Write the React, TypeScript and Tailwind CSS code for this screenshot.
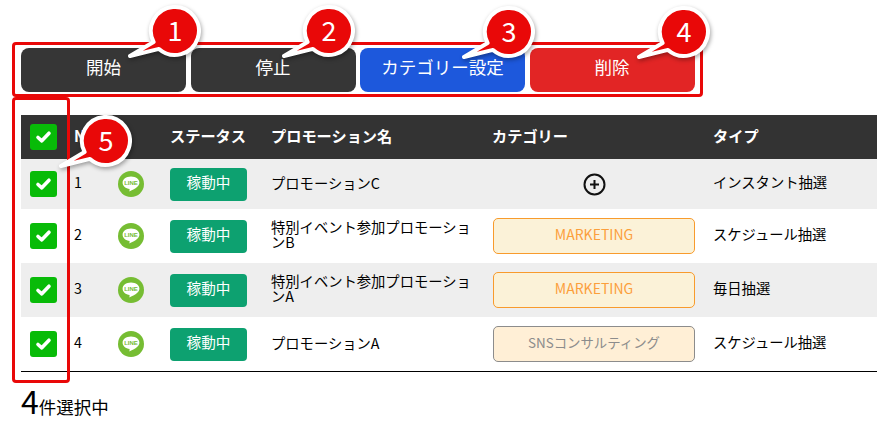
const rows = [
  { no: 1, name: "プロモーションC", type: "インスタント抽選", h: "h-[50px]", bg: "bg-[#eeeeee]", cat: null },
  { no: 2, name: "特別イベント参加プロモーションB", type: "スケジュール抽選", h: "h-[54px]", bg: "bg-white", cat: "marketing" },
  { no: 3, name: "特別イベント参加プロモーションA", type: "毎日抽選", h: "h-[54px]", bg: "bg-[#eeeeee]", cat: "marketing" },
  { no: 4, name: "プロモーションA", type: "スケジュール抽選", h: "h-[54px]", bg: "bg-white", cat: "sns" },
];

function CheckBox() {
  return (
    <div className="w-[27px] h-[26px] rounded-[3px] bg-[#08bb08] flex items-center justify-center">
      <svg width="17" height="14" viewBox="0 0 17 14">
        <path d="M3 7.5 L6.8 10.8 L14 3.2" fill="none" stroke="#fff" strokeWidth="3.6" strokeLinecap="round" strokeLinejoin="round" />
      </svg>
    </div>
  );
}

function LineIcon() {
  return (
    <svg width="26" height="26" viewBox="0 0 26 26">
      <circle cx="13" cy="13" r="13" fill="#76bd33" />
      <path d="M13 5.5 C8 5.5 4.6 8.3 4.6 11.8 C4.6 15.2 7.8 17.6 11.6 17.9 L11.4 20.4 C14.5 19 21.4 16.3 21.4 11.8 C21.4 8.3 18 5.5 13 5.5 Z" fill="#fff" />
      <text x="13" y="14" textAnchor="middle" fontSize="6" fontWeight="700" fill="#76bd33" fontFamily="Liberation Sans, sans-serif">LINE</text>
    </svg>
  );
}

function PlusIcon() {
  return (
    <svg width="23" height="23" viewBox="0 0 23 23">
      <circle cx="11.5" cy="11.5" r="10" fill="none" stroke="#111" strokeWidth="2" />
      <path d="M11.5 7 V16 M7 11.5 H16" stroke="#111" strokeWidth="2" />
    </svg>
  );
}

function Category({ cat }: { cat: string | null }) {
  if (cat === "marketing") {
    return (
      <div className="w-[202px] h-[36px] rounded-[5px] border border-[#f89b2c] bg-[#fbf2d8] text-[#fb9f3c] text-[14px] flex items-center justify-center pb-[3px]">
        MARKETING
      </div>
    );
  }
  if (cat === "sns") {
    return (
      <div className="w-[202px] h-[36px] rounded-[5px] border border-[#8c8c8c] bg-[#ffefd6] text-[#8c8c8c] text-[13.4px] flex items-center justify-center pb-[4px]">
        SNSコンサルティング
      </div>
    );
  }
  return (
    <div className="w-[202px] flex justify-center">
      <PlusIcon />
    </div>
  );
}

function Callout({ n, pos }: { n: number; pos: string }) {
  return (
    <div className={`absolute w-[75px] h-[60px] ${pos}`}>
      <svg width="75" height="60" viewBox="0 0 75 60" className="drop-shadow-[1px_2px_2px_rgba(0,0,0,0.35)]">
        <path d="M3 53 L26.6 39 A24 24 0 1 1 32 45.9 Z" fill="#e90808" stroke="#fff" strokeWidth="4" strokeLinejoin="round" />
      </svg>
      <span className="absolute left-[25px] top-[3px] w-[46px] h-[46px] flex items-center justify-center text-white text-[27px] leading-none">
        {n}
      </span>
    </div>
  );
}

function ActionButton({ label, color }: { label: string; color: string }) {
  return (
    <button className={`w-[165px] h-[44px] rounded-[8px] text-white text-[17.5px] flex items-center justify-center pb-[6px] ${color}`}>
      {label}
    </button>
  );
}

export default function App() {
  return (
    <div className="relative w-[877px] h-[444px] overflow-hidden bg-white pt-[48px] pl-[21px] text-black text-[14.3px] font-['Noto_Sans_CJK_JP','Noto_Sans',sans-serif]">
      <div className="flex gap-[4.5px]">
        <ActionButton label="開始" color="bg-[#363636]" />
        <ActionButton label="停止" color="bg-[#363636]" />
        <ActionButton label="カテゴリー設定" color="bg-[#1d58dc]" />
        <ActionButton label="削除" color="bg-[#e22525]" />
      </div>

      <div className="mt-[23px]">
        <div className="flex items-center h-[44px] bg-[#333333] text-white font-bold text-[15.2px]">
          <div className="w-[45px] pl-[9px]">
            <CheckBox />
          </div>
          <div className="w-[104px] pl-[8px] pb-[4px]">No</div>
          <div className="w-[101px] pb-[4px]">ステータス</div>
          <div className="w-[221px] pb-[4px]">プロモーション名</div>
          <div className="w-[221px] pb-[4px]">カテゴリー</div>
          <div className="pb-[4px]">タイプ</div>
        </div>

        {rows.map((r) => (
          <div key={r.no} className={`flex items-center ${r.h} ${r.bg}`}>
            <div className="w-[45px] pl-[9px]">
              <CheckBox />
            </div>
            <div className="w-[52px] pl-[8px] pb-[4px]">{r.no}</div>
            <div className="w-[52px]">
              <LineIcon />
            </div>
            <div className="w-[102px]">
              <div className="w-[77px] h-[33px] rounded-[4px] bg-[#0da170] text-white text-[14.6px] flex items-center justify-center pb-[4px]">
                稼動中
              </div>
            </div>
            <div className="w-[221px] pr-[16px] pb-[4px] -ml-px mr-px leading-[15px] break-all">{r.name}</div>
            <div className="w-[220px]">
              <Category cat={r.cat} />
            </div>
            <div className="pb-[4px]">{r.type}</div>
          </div>
        ))}
        <div className="h-px bg-black" />
      </div>

      <div className="mt-[10px] flex items-baseline leading-none">
        <span className="text-[32px] leading-[36px]">4</span>
        <span className="text-[17.5px]">件選択中</span>
      </div>

      {/* 赤枠 */}
      <div className="absolute left-[12px] top-[42px] w-[691px] h-[55px] rounded-[4px] border-[3px] border-[#e90808]" />
      <div className="absolute left-[12px] top-[97px] w-[58px] h-[286px] rounded-[4px] border-[3px] border-[#e90808]" />

      <Callout n={1} pos="left-[127px] top-[3px]" />
      <Callout n={2} pos="left-[281px] top-[3px]" />
      <Callout n={3} pos="left-[461px] top-[4px]" />
      <Callout n={4} pos="left-[636px] top-[4px]" />
      <Callout n={5} pos="left-[58px] top-[113px]" />
    </div>
  );
}
